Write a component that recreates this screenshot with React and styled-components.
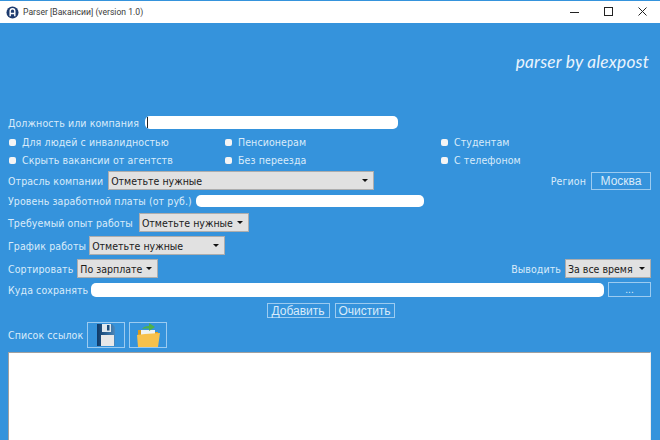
import React from "react";
import styled, { createGlobalStyle } from "styled-components";

const Global = createGlobalStyle`
  html, body { margin: 0; padding: 0; background: #3593dc; }
  * { box-sizing: border-box; }
`;
const Win = styled.div`
  width: 660px; height: 440px; overflow: hidden; background: #3593dc;
  border-top: 1px solid #3593dc;
  font-family: "DejaVu Sans Condensed", "DejaVu Sans", sans-serif; font-stretch: condensed; font-size: 10.5px; color: #d9ebfa;
  display: flex; flex-direction: column;
`;
const TitleBar = styled.div`
  height: 22px; flex: none; background: #fff; display: flex; align-items: center; padding-left: 6px;
`;
const TitleText = styled.span`margin-left: 4px; font-family: "Roboto", sans-serif; font-stretch: normal; font-size: 8.6px; color: #3a3a3a;`;
const WinButtons = styled.div`margin-left: auto; display: flex; height: 100%;`;
const WinBtn = styled.div`width: 34px; display: flex; align-items: center; justify-content: center;`;
const Main = styled.div`flex: 1; display: flex; flex-direction: column; padding: 0 9px 0 8px; min-height: 0;`;
const Brand = styled.div`
  height: 93px; flex: none; display: flex; justify-content: flex-end; padding: 28px 2px 0 0;
  font-family: "Lato", sans-serif; font-style: italic; font-stretch: normal; font-size: 17.3px; color: #eaf4fd; letter-spacing: .2px; line-height: 22px;
`;
const Row = styled.div`
  display: flex; align-items: center; height: ${p => p.$h}px; margin-top: ${p => p.$mt || 0}px; flex: none; gap: ${p => p.$gap ?? 4}px;
`;
const Label = styled.span`white-space: nowrap; line-height: 14px; letter-spacing: .1px; ${p => p.$w ? `width: ${p.$w}px;` : ""}`;
const TextField = styled.div`
  height: ${p => p.$h}px; width: ${p => p.$w ? p.$w + "px" : "auto"}; flex: ${p => p.$w ? "none" : 1};
  background: #fff; border-radius: 5px; position: relative;
`;
const Caret = styled.i`position: absolute; left: 2px; top: 1px; bottom: 1px; width: 1px; background: #222;`;
const Checks = styled.div`
  display: grid; grid-template-columns: repeat(3, 216px); grid-auto-rows: 18px; margin-top: 4px; padding-left: 1px; flex: none; letter-spacing: .1px;
`;
const Check = styled.label`display: flex; align-items: center; gap: 6px; white-space: nowrap;`;
const Box = styled.span`width: 7px; height: 7px; border-radius: 2px; background: #f4f4f4; flex: none;`;
const Select = styled.div`
  width: ${p => p.$w}px; height: 19px; flex: none; background: #e1e1e1; border: 1px solid #adadad;
  display: flex; align-items: center; padding: 0 5px 0 2px; color: #1a1a1a;
  &::after { content: ""; margin-left: auto; border: 3px solid transparent; border-top: 3.5px solid #111; border-bottom: 0; }
`;
const Spacer = styled.div`flex: 1;`;
const Ghost = styled.button`
  width: ${p => p.$w}px; height: ${p => p.$h}px; flex: none; background: transparent; border: 1px solid #9ccbf0; color: #d9ebfa;
  font-family: "Liberation Sans", sans-serif; font-size: ${p => p.$fs || 12}px; padding: 0; line-height: 1; display: flex; align-items: center; justify-content: center;
`;
const Center = styled.div`display: flex; justify-content: center; gap: 5px; margin-top: 6px; flex: none; padding-left: 2px;`;
const ListArea = styled.div`
  flex: none; height: 100px; margin-top: 4px; background: #fff; border: 1px solid #a0a0a0; border-right-color: #eee;
`;

const Save = () => (
  <svg width="18" height="22" viewBox="0 0 18 22">
    <defs><linearGradient id="s" x1="0" x2="1"><stop offset="0" stopColor="#0f3a68"/><stop offset="1" stopColor="#4a88bc"/></linearGradient></defs>
    <path d="M0 0h15l3 3v19H0z" fill="url(#s)"/>
    <rect x="5" y="0" width="9" height="8" fill="#dfe8ee"/>
    <rect x="10" y="1" width="2.500" height="5.500" fill="#1c4a78"/>
    <rect x="4" y="11" width="13" height="11" fill="#e8e8e8"/>
  </svg>
);
const Folder = () => (
  <svg width="24" height="24" viewBox="0 0 24 24">
    <path d="M2 7h6l2 2h12v14H2z" fill="#d99a1e"/>
    <rect x="5" y="7" width="14" height="8" fill="#eef2f2"/>
    <path d="M6 6c1-2 4-3 7-3V0l6 4-6 4V5.500c-3 0-5 0-7 .5z" fill="#4fb04a"/>
    <path d="M1 12l8-1 15-1-2 14H2z" fill="#f7c14b"/>
  </svg>
);

export default function App() {
  return (
    <Win>
      <Global />
      <TitleBar>
        <svg width="13" height="13" viewBox="0 0 14 14">
          <circle cx="7" cy="7" r="6.500" fill="#1d3a6e" />
          <path d="M4.500 11V5.500a2.500 2.500 0 015 0V11M4.500 8h5" fill="none" stroke="#fff" strokeWidth="1.500" />
        </svg>
        <TitleText>Parser [Вакансии] (version 1.0)</TitleText>
        <WinButtons>
          <WinBtn>
            <svg width="10" height="10"><path d="M0 5.500h9" stroke="#222" /></svg>
          </WinBtn>
          <WinBtn>
            <svg width="10" height="10"><rect x=".5" y=".5" width="8" height="8" fill="none" stroke="#222" /></svg>
          </WinBtn>
          <WinBtn>
            <svg width="10" height="10"><path d="M.5.500l8 8M8.500.500l-8 8" stroke="#222" /></svg>
          </WinBtn>
        </WinButtons>
      </TitleBar>
      <Main>
        <Brand>parser by alexpost</Brand>
        <Row $h={13} $gap={6}>
          <Label>Должность или компания</Label>
          <TextField $w={253} $h={13}><Caret /></TextField>
        </Row>
        <Checks>
          <Check><Box />Для людей с инвалидностью</Check>
          <Check><Box />Пенсионерам</Check>
          <Check><Box />Студентам</Check>
          <Check><Box />Скрыть вакансии от агентств</Check>
          <Check><Box />Без переезда</Check>
          <Check><Box />С телефоном</Check>
        </Checks>
        <Row $h={19} $mt={2} $gap={5}>
          <Label>Отрасль компании</Label>
          <Select $w={266}>Отметьте нужные</Select>
          <Spacer />
          <Label>Регион</Label>
          <Ghost $w={60} $h={18}>Москва</Ghost>
        </Row>
        <Row $h={12} $mt={5} $gap={4}>
          <Label>Уровень заработной платы (от руб.)</Label>
          <TextField $w={228} $h={12} />
        </Row>
        <Row $h={19} $mt={6} $gap={6}>
          <Label>Требуемый опыт работы</Label>
          <Select $w={110}>Отметьте нужные</Select>
        </Row>
        <Row $h={19} $mt={4} $gap={3}>
          <Label>График работы</Label>
          <Select $w={136}>Отметьте нужные</Select>
        </Row>
        <Row $h={19} $mt={4} $gap={4}>
          <Label>Сортировать</Label>
          <Select $w={81}>По зарплате</Select>
          <Spacer />
          <Label>Выводить</Label>
          <Select $w={86}>За все время</Select>
        </Row>
        <Row $h={15} $mt={4}>
          <Label $w={79}>Куда сохранять</Label>
          <TextField $h={14} />
          <Ghost $w={43} $h={15} $fs={10}>...</Ghost>
        </Row>
        <Center>
          <Ghost $w={63} $h={15}>Добавить</Ghost>
          <Ghost $w={60} $h={15}>Очистить</Ghost>
        </Center>
        <Row $h={26} $mt={4} $gap={4}>
          <Label>Список ссылок</Label>
          <Ghost $w={38} $h={26}><Save /></Ghost>
          <Ghost $w={38} $h={26}><Folder /></Ghost>
        </Row>
        <ListArea />
      </Main>
    </Win>
  );
}
